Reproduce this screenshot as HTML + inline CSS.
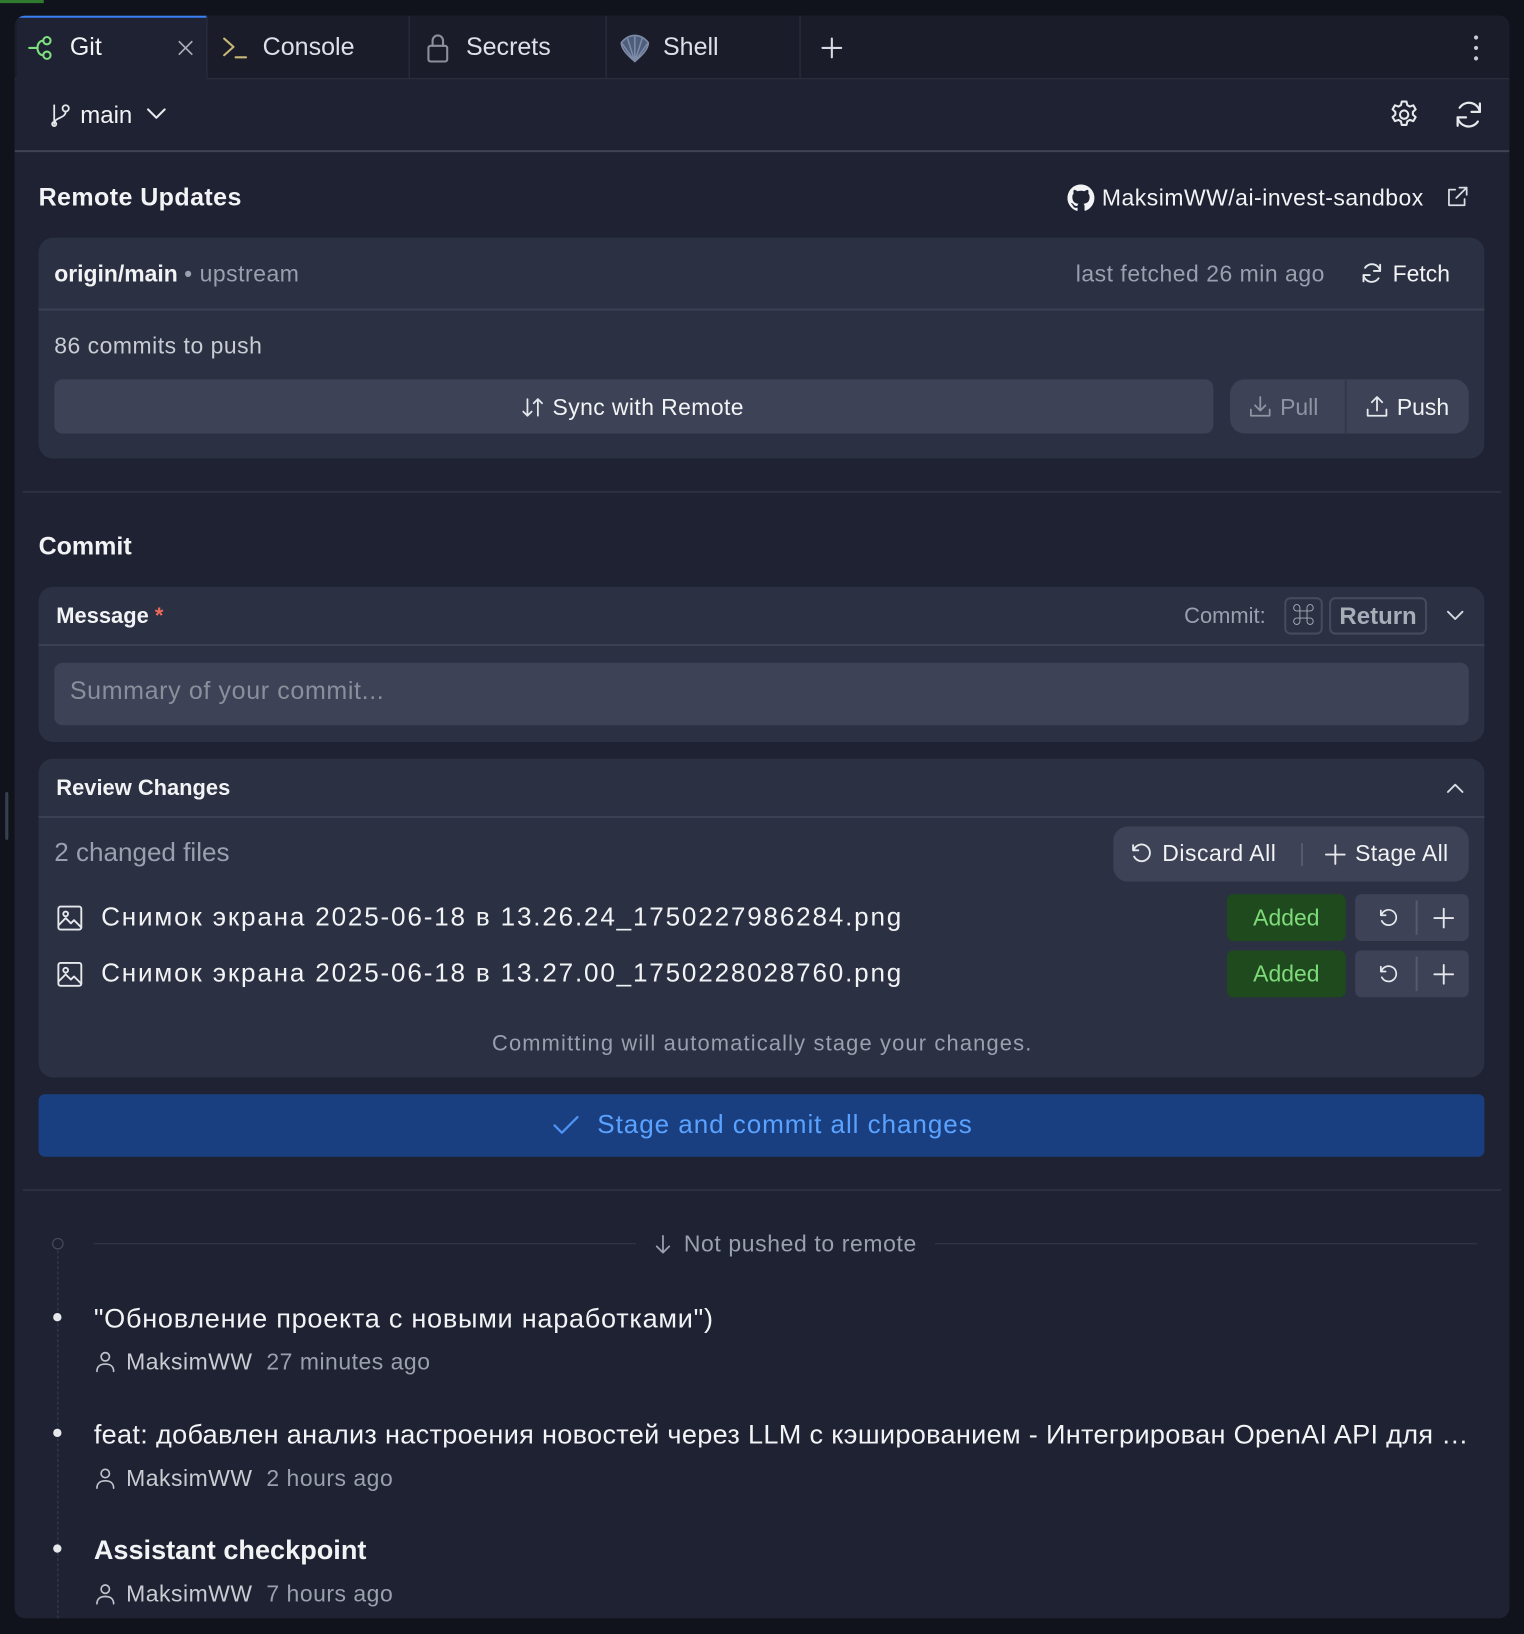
<!DOCTYPE html>
<html><head><meta charset="utf-8"><style>
*{box-sizing:border-box;margin:0;padding:0}
html,body{width:1524px;height:1634px;overflow:hidden;background:#10131b}
#w{position:absolute;left:0;top:0;width:1462px;height:1568px;transform:scale(1.04241,1.04209);transform-origin:0 0;font-family:"Liberation Sans","Noto Sans CJK SC",sans-serif;color:#f2f3f5}
.a{position:absolute}
.t{position:absolute;white-space:nowrap;line-height:1}
svg{position:absolute;fill:none;stroke-linecap:round;stroke-linejoin:round}
.card{position:absolute;background:#2b3043;border-radius:14px}
.hl{position:absolute;height:2px;background:#3b4053}
.g{color:#9aa0ad}
</style></head><body><div id="w">
<div class="a" style="left:0;top:0;width:42px;height:3px;background:#2f7a2f"></div>
<div class="a" style="left:14px;top:15px;width:1434px;height:1538px;background:#1e2232;border-radius:10px;overflow:hidden">
 <div class="a" style="left:0;top:0;width:1434px;height:61px;background:#1a1d29;border-bottom:1px solid #2c3040"></div>
 <div class="a" style="left:2px;top:0;width:182px;height:62px;background:#1e2232;border-top:2px solid #3b82f6"></div>
 <div class="a" style="left:184px;top:0;width:1px;height:61px;background:#2c3040"></div>
 <div class="a" style="left:378px;top:0;width:1px;height:61px;background:#2c3040"></div>
 <div class="a" style="left:567px;top:0;width:1px;height:61px;background:#2c3040"></div>
 <div class="a" style="left:753px;top:0;width:1px;height:61px;background:#2c3040"></div>
 <div class="hl" style="left:0;top:129px;width:1434px;height:2px;background:#3d4254"></div>
</div>
<!-- tabs -->
<svg style="left:26px;top:32px" width="28" height="28" viewBox="0 0 28 28" stroke="#7ee07e" stroke-width="2"><path d="M2 14h8"/><circle cx="19" cy="7" r="3.5"/><circle cx="19" cy="21" r="3.5"/><path d="M10 14c0-5 3-7 5.5-7M10 14c0 5 3 7 5.5 7"/></svg>
<div class="t" style="left:67px;top:34px;font-size:24px">Git</div>
<svg style="left:170px;top:38px" width="16" height="16" stroke="#aab0bb" stroke-width="1.6"><path d="M2 2l12 12M14 2L2 14"/></svg>
<svg style="left:212px;top:34px" width="28" height="24" stroke="#c8b878" stroke-width="2"><path d="M3 3l9 8-9 8"/><path d="M14 21h10" stroke="#c8b878"/></svg>
<div class="t" style="left:252px;top:34px;font-size:24px;color:#dde0e6">Console</div>
<svg style="left:408px;top:31px" width="24" height="30" stroke="#8b909b" stroke-width="2"><rect x="3" y="13" width="18" height="15" rx="2"/><path d="M7 13V8a5 5 0 0 1 10 0v5"/></svg>
<div class="t" style="left:447px;top:34px;font-size:24px;color:#dde0e6">Secrets</div>
<svg style="left:594px;top:31px" width="30" height="30" viewBox="0 0 30 30" stroke="#7d8ba6" stroke-width="1.5"><path d="M15 28C8 22 2 16 2 10c4-5 9-7 13-7s9 2 13 7c0 6-6 12-13 18z" fill="#4d5d7c"/><path d="M15 28V4M15 28L8 6M15 28L22 6M15 28L3 11M15 28l12-17"/></svg>
<div class="t" style="left:636px;top:34px;font-size:24px;color:#dde0e6">Shell</div>
<svg style="left:787px;top:35px" width="22" height="22" stroke="#d8dbe2" stroke-width="2"><path d="M11 2v18M2 11h18"/></svg>
<div class="a" style="left:1414px;top:34px;width:4px;height:4px;border-radius:2px;background:#c8ccd4"></div>
<div class="a" style="left:1414px;top:44px;width:4px;height:4px;border-radius:2px;background:#c8ccd4"></div>
<div class="a" style="left:1414px;top:54px;width:4px;height:4px;border-radius:2px;background:#c8ccd4"></div>
<!-- branch row -->
<svg style="left:47px;top:99px" width="22" height="24" stroke="#e6e8ec" stroke-width="1.7"><path d="M5 2v18"/><circle cx="16" cy="5" r="3"/><path d="M16 8c0 7-11 5-11 12"/><circle cx="5" cy="20" r="2"/></svg>
<div class="t" style="left:77px;top:99px;font-size:23px">main</div>
<svg style="left:140px;top:102px" width="20" height="14" stroke="#e6e8ec" stroke-width="2"><path d="M2 3l8 8 8-8"/></svg>
<svg style="left:1331px;top:94px" width="32" height="32" viewBox="0 0 24 24" stroke="#e6e8ec" stroke-width="1.5"><circle cx="12" cy="12" r="3"/><path d="M10.3 2.6h3.4l.6 2.6 1.8 1 2.5-.9 1.7 2.9-2 1.8v2l2 1.8-1.7 2.9-2.5-.9-1.8 1-.6 2.6h-3.4l-.6-2.6-1.8-1-2.5.9-1.7-2.9 2-1.8v-2l-2-1.8 1.7-2.9 2.5.9 1.8-1z"/></svg>
<svg style="left:1392px;top:94px" width="34" height="32" viewBox="0 0 24 24" stroke="#e6e8ec" stroke-width="1.6"><path d="M20 10A8 8 0 0 0 5.5 7M4 14a8 8 0 0 0 14.5 3"/><path d="M20 4v6h-6M4 20v-6h6"/></svg>
<!-- remote -->
<div class="t" style="left:37px;top:178px;font-size:24px;font-weight:bold;letter-spacing:0.4px">Remote Updates</div>
<svg style="left:1024px;top:177px" width="26" height="26" viewBox="0 0 16 16"><path fill="#f2f3f5" stroke="none" d="M8 0a8 8 0 0 0-2.5 15.6c.4 0 .5-.2.5-.4v-1.5c-2.2.5-2.7-1-2.7-1-.4-.9-.9-1.2-.9-1.2-.7-.5.1-.5.1-.5.8.1 1.2.8 1.2.8.7 1.3 1.9.9 2.3.7.1-.5.3-.9.5-1.100-1.8-.2-3.6-.9-3.6-4 0-.9.3-1.6.8-2.1-.1-.2-.4-1 .1-2.1 0 0 .7-.2 2.2.8a7.5 7.5 0 0 1 4 0c1.5-1 2.2-.8 2.2-.8.4 1.1.2 1.9.1 2.1.5.6.8 1.3.8 2.1 0 3.1-1.9 3.8-3.6 4 .3.3.6.8.6 1.5v2.2c0 .2.1.5.6.4A8 8 0 0 0 8 0z"/></svg>
<div class="t" style="left:1057px;top:179px;font-size:22px;letter-spacing:0.5px">MaksimWW/ai-invest-sandbox</div>
<svg style="left:1387px;top:178px" width="22" height="22" stroke="#d8dbe2" stroke-width="1.7"><path d="M9 4H3v15h15v-6M13 2h7v7M20 2L10 12"/></svg>
<div class="card" style="left:37px;top:228px;width:1387px;height:212px"></div>
<div class="hl" style="left:37px;top:296px;width:1387px"></div>
<div class="t" style="left:52px;top:252px;font-size:22px;font-weight:bold">origin/main <span style="font-weight:normal;color:#9aa0ad;letter-spacing:0.5px">• upstream</span></div>
<div class="t g" style="left:1032px;top:252px;font-size:22px;letter-spacing:0.5px">last fetched 26 min ago</div>
<svg style="left:1304px;top:250px" width="24" height="24" viewBox="0 0 24 24" stroke="#e6e8ec" stroke-width="1.8"><path d="M20 10A8 8 0 0 0 5.5 7M4 14a8 8 0 0 0 14.5 3"/><path d="M20 4v6h-6M4 20v-6h6"/></svg>
<div class="t" style="left:1336px;top:252px;font-size:22px">Fetch</div>
<div class="t" style="left:52px;top:321px;font-size:22px;color:#c9ccd3;letter-spacing:0.5px">86 commits to push</div>
<div class="a" style="left:52px;top:364px;width:1112px;height:52px;background:#3d4256;border-radius:8px"></div>
<svg style="left:500px;top:380px" width="22" height="22" stroke="#e6e8ec" stroke-width="1.7"><path d="M6 3v16M2 15l4 4 4-4M16 19V3M12 7l4-4 4 4"/></svg>
<div class="t" style="left:530px;top:380px;font-size:22px;letter-spacing:0.4px">Sync with Remote</div>
<div class="a" style="left:1180px;top:364px;width:229px;height:52px;background:#3d4256;border-radius:14px"></div>
<div class="a" style="left:1290px;top:364px;width:2px;height:52px;background:#33384a"></div>
<svg style="left:1197px;top:379px" width="24" height="22" stroke="#8e94a1" stroke-width="1.7"><path d="M12 2v13M7 10l5 5 5-5M3 14v6h18v-6"/></svg>
<div class="t" style="left:1228px;top:380px;font-size:22px;color:#8e94a1">Pull</div>
<svg style="left:1309px;top:379px" width="24" height="22" stroke="#e6e8ec" stroke-width="1.7"><path d="M12 15V2M7 7l5-5 5 5M3 14v6h18v-6"/></svg>
<div class="t" style="left:1340px;top:380px;font-size:22px">Push</div>
<div class="hl" style="left:22px;top:471px;width:1418px;background:#2c3142"></div>
<!-- commit -->
<div class="t" style="left:37px;top:513px;font-size:24px;font-weight:bold">Commit</div>
<div class="card" style="left:37px;top:563px;width:1387px;height:149px"></div>
<div class="hl" style="left:37px;top:618px;width:1387px"></div>
<div class="t" style="left:54px;top:581px;font-size:21px;font-weight:bold">Message <span style="color:#f06a5a">*</span></div>
<div class="t g" style="left:1136px;top:581px;font-size:21px">Commit:</div>
<div class="a" style="left:1232px;top:573px;width:37px;height:36px;border:2px solid #454a5c;border-radius:6px;color:#a8adb8;font-size:22px;text-align:center;line-height:32px">⌘</div>
<div class="a" style="left:1275px;top:573px;width:94px;height:36px;border:2px solid #454a5c;border-radius:6px;color:#a8adb8;font-size:23px;font-weight:bold;text-align:center;line-height:32px">Return</div>
<svg style="left:1387px;top:584px" width="18" height="14" stroke="#d8dbe2" stroke-width="1.8"><path d="M2 3l7 7 7-7"/></svg>
<div class="a" style="left:52px;top:636px;width:1357px;height:60px;background:#3d4256;border-radius:8px"></div>
<div class="t" style="left:67px;top:652px;font-size:24px;color:#8a8f9c;letter-spacing:0.6px">Summary of your commit...</div>
<!-- review -->
<div class="card" style="left:37px;top:728px;width:1387px;height:306px"></div>
<div class="hl" style="left:37px;top:783px;width:1387px"></div>
<div class="t" style="left:54px;top:746px;font-size:21px;font-weight:bold">Review Changes</div>
<svg style="left:1387px;top:749px" width="18" height="14" stroke="#d8dbe2" stroke-width="1.8"><path d="M2 11l7-7 7 7"/></svg>
<div class="t g" style="left:52px;top:806px;font-size:25px">2 changed files</div>
<div class="a" style="left:1068px;top:793px;width:341px;height:53px;background:#3d4256;border-radius:14px"></div>
<svg style="left:1083px;top:807px" width="24" height="24" viewBox="0 0 24 24" stroke="#e6e8ec" stroke-width="1.8"><path d="M4 4v5h5"/><path d="M4.5 9A8 8 0 1 1 5 15"/></svg>
<div class="t" style="left:1115px;top:808px;font-size:22px;letter-spacing:0.5px">Discard All</div>
<div class="a" style="left:1248px;top:809px;width:2px;height:22px;background:#555a6c"></div>
<svg style="left:1270px;top:809px" width="22" height="22" stroke="#e6e8ec" stroke-width="1.8"><path d="M11 2v18M2 11h18"/></svg>
<div class="t" style="left:1300px;top:808px;font-size:22px;letter-spacing:0.3px">Stage All</div>
<!-- files -->
<svg style="left:54px;top:868px" width="26" height="26" stroke="#e6e8ec" stroke-width="1.8"><rect x="2" y="2" width="22" height="22" rx="2"/><circle cx="9" cy="9" r="2.3"/><path d="M2 20l7-7 5 5 3-3 7 7"/></svg>
<div class="t" style="left:97px;top:868px;font-size:25px;letter-spacing:1.75px">Снимок экрана 2025-06-18 в 13.26.24_1750227986284.png</div>
<div class="a" style="left:1177px;top:858px;width:114px;height:45px;background:#1f4a1d;border-radius:6px;color:#7ddc79;font-size:22px;text-align:center;line-height:45px">Added</div>
<div class="a" style="left:1300px;top:858px;width:109px;height:45px;background:#3d4256;border-radius:6px"></div>
<div class="a" style="left:1358px;top:864px;width:2px;height:33px;background:#555a6c"></div>
<svg style="left:1321px;top:870px" width="22" height="22" viewBox="0 0 24 24" stroke="#e6e8ec" stroke-width="1.8"><path d="M4 4v5h5"/><path d="M4.5 9A8 8 0 1 1 5 15"/></svg>
<svg style="left:1374px;top:870px" width="22" height="22" stroke="#e6e8ec" stroke-width="1.8"><path d="M11 2v18M2 11h18"/></svg>
<svg style="left:54px;top:922px" width="26" height="26" stroke="#e6e8ec" stroke-width="1.8"><rect x="2" y="2" width="22" height="22" rx="2"/><circle cx="9" cy="9" r="2.3"/><path d="M2 20l7-7 5 5 3-3 7 7"/></svg>
<div class="t" style="left:97px;top:922px;font-size:25px;letter-spacing:1.75px">Снимок экрана 2025-06-18 в 13.27.00_1750228028760.png</div>
<div class="a" style="left:1177px;top:912px;width:114px;height:45px;background:#1f4a1d;border-radius:6px;color:#7ddc79;font-size:22px;text-align:center;line-height:45px">Added</div>
<div class="a" style="left:1300px;top:912px;width:109px;height:45px;background:#3d4256;border-radius:6px"></div>
<div class="a" style="left:1358px;top:918px;width:2px;height:33px;background:#555a6c"></div>
<svg style="left:1321px;top:924px" width="22" height="22" viewBox="0 0 24 24" stroke="#e6e8ec" stroke-width="1.8"><path d="M4 4v5h5"/><path d="M4.5 9A8 8 0 1 1 5 15"/></svg>
<svg style="left:1374px;top:924px" width="22" height="22" stroke="#e6e8ec" stroke-width="1.8"><path d="M11 2v18M2 11h18"/></svg>
<div class="t g" style="left:472px;top:991px;font-size:21px;letter-spacing:1.1px">Committing will automatically stage your changes.</div>
<!-- commit button -->
<div class="a" style="left:37px;top:1050px;width:1387px;height:60px;background:#1a3f80;border-radius:6px"></div>
<svg style="left:529px;top:1068px" width="28" height="24" stroke="#4c95f5" stroke-width="2.2"><path d="M3 12l7 7L25 4"/></svg>
<div class="t" style="left:573px;top:1067px;font-size:25px;color:#5aa2ff;letter-spacing:0.9px">Stage and commit all changes</div>
<div class="hl" style="left:22px;top:1141px;width:1418px;background:#2c3142"></div>
<!-- timeline -->
<div class="a" style="left:50px;top:1188px;width:11px;height:11px;border:1.5px solid #4a4f60;border-radius:6px"></div>
<div class="a" style="left:55px;top:1200px;width:0;height:353px;border-left:1.5px dashed #3a3f50"></div>
<div class="a" style="left:90px;top:1193px;width:520px;height:1px;background:#343949"></div>
<div class="a" style="left:897px;top:1193px;width:520px;height:1px;background:#343949"></div>
<svg style="left:627px;top:1184px" width="18" height="20" stroke="#9aa0ad" stroke-width="1.7"><path d="M9 2v16M3 12l6 6 6-6"/></svg>
<div class="t g" style="left:656px;top:1183px;font-size:22px;letter-spacing:0.6px">Not pushed to remote</div>
<div class="a" style="left:51px;top:1260px;width:8px;height:8px;border-radius:4px;background:#e6e8ec"></div>
<div class="t" style="left:90px;top:1252px;font-size:26px;letter-spacing:0.7px">"Обновление проекта с новыми наработками")</div>
<div class="a" style="left:51px;top:1371px;width:8px;height:8px;border-radius:4px;background:#e6e8ec"></div>
<div class="t" style="left:90px;top:1363px;font-size:26px;width:1322px;overflow:hidden;text-overflow:ellipsis;letter-spacing:0.3px">feat: добавлен анализ настроения новостей через LLM с кэшированием - Интегрирован OpenAI API для анализа</div>
<div class="a" style="left:51px;top:1482px;width:8px;height:8px;border-radius:4px;background:#e6e8ec"></div>
<div class="t" style="left:90px;top:1474px;font-size:26px;font-weight:bold">Assistant checkpoint</div>
<svg style="left:91px;top:1296px" width="20" height="22" stroke="#c0c4cc" stroke-width="1.6"><circle cx="10" cy="6" r="4"/><path d="M2 20c0-5 3.5-7 8-7s8 2 8 7"/></svg>
<div class="t g" style="left:121px;top:1296px;font-size:22px;letter-spacing:0.5px"><span style="color:#c9ccd3">MaksimWW</span>&nbsp;&nbsp;27 minutes ago</div>
<svg style="left:91px;top:1408px" width="20" height="22" stroke="#c0c4cc" stroke-width="1.6"><circle cx="10" cy="6" r="4"/><path d="M2 20c0-5 3.5-7 8-7s8 2 8 7"/></svg>
<div class="t g" style="left:121px;top:1408px;font-size:22px;letter-spacing:0.5px"><span style="color:#c9ccd3">MaksimWW</span>&nbsp;&nbsp;2 hours ago</div>
<svg style="left:91px;top:1519px" width="20" height="22" stroke="#c0c4cc" stroke-width="1.6"><circle cx="10" cy="6" r="4"/><path d="M2 20c0-5 3.5-7 8-7s8 2 8 7"/></svg>
<div class="t g" style="left:121px;top:1519px;font-size:22px;letter-spacing:0.5px"><span style="color:#c9ccd3">MaksimWW</span>&nbsp;&nbsp;7 hours ago</div>
<div class="a" style="left:5px;top:760px;width:3px;height:46px;background:#3a3f50;border-radius:2px"></div>
</div></body></html>
